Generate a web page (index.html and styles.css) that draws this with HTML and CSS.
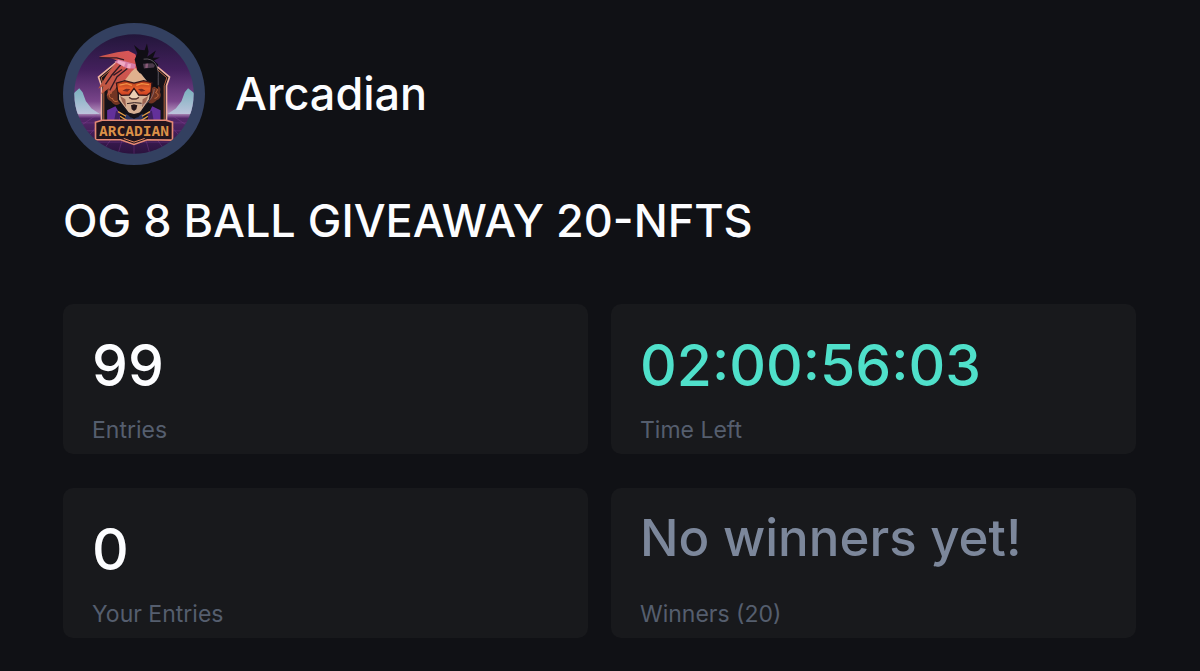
FILE: index.html
```html
<!DOCTYPE html>
<html lang="en">
<head>
<meta charset="utf-8">
<meta name="viewport" content="width=device-width, initial-scale=1">
<title>Arcadian giveaway</title>
<link rel="stylesheet" href="styles.css">
</head>
<body>
<main class="giveaway">
  <header class="host">
    <svg class="avatar" viewBox="27 27 428 428" role="img" aria-label="Arcadian logo">
      <defs>
        <clipPath id="disc"><circle cx="241" cy="241" r="180"/></clipPath>
        <linearGradient id="sky" x1="0" y1="0" x2="0" y2="1">
          <stop offset="0" stop-color="#22163a"/>
          <stop offset=".3" stop-color="#43205c"/>
          <stop offset=".56" stop-color="#79458a"/>
          <stop offset=".66" stop-color="#b795c0"/>
          <stop offset=".7" stop-color="#54286a"/>
          <stop offset="1" stop-color="#2a123e"/>
        </linearGradient>
        <linearGradient id="peak" x1="0" y1="0" x2="0" y2="1">
          <stop offset="0" stop-color="#79b0bd"/>
          <stop offset="1" stop-color="#bcc4dc"/>
        </linearGradient>
        <linearGradient id="hair" x1="1" y1="0" x2="0" y2="1">
          <stop offset="0" stop-color="#dc555c"/>
          <stop offset="1" stop-color="#b9573c"/>
        </linearGradient>
        <linearGradient id="lens" x1="0" y1="0" x2="0" y2="1">
          <stop offset="0" stop-color="#a93518"/>
          <stop offset=".55" stop-color="#ea622e"/>
          <stop offset="1" stop-color="#c83b20"/>
        </linearGradient>
      </defs>
      <circle cx="241" cy="241" r="214" fill="#334060"/>
      <g clip-path="url(#disc)">
        <path fill="url(#sky)" d="M60 60h362v362H60z"/>
        <path fill="url(#peak)" d="M58 240l18-16 10 12 10 27 17 22 25 16H58zM424 240l-20-16-10 12-10 27-17 22-25 16h82z"/>
        <path fill="none" stroke="#9146a0" stroke-width="2" opacity=".5" d="M60 310h362M60 328h362M60 352h362M60 386h362M130 303L60 350M160 303L75 400M205 380l-12 42M241 390v32M277 380l12 42M322 303l85 97M352 303l70 47M170 380l-30 42M312 380l30 42"/>
        <path fill="#161318" stroke="#efb0a0" stroke-width="5" d="M186 147l-52 43 9 26v112h196V216l9-26-45-38z"/>
        <path fill="none" stroke="#b96540" stroke-width="3" d="M182 158l-40 34 8 26v104h182V216l8-24-36-31"/>
        <path fill="#121116" d="M187 270l-27 20v42h162v-42l-30-22z"/>
        <path fill="#63309a" d="M160 290l25-12 10 17 7 37h-42zM296 278l25 12v42h-40l6-36z"/>
        <path fill="#402062" d="M187 291l13 10-8 31h-13zM281 301l14-10 7 41h-13z"/>
        <path fill="#2b345e" d="M216 300l25 16 26-16 7 33h-65z"/>
        <path fill="none" stroke="#e29b46" stroke-width="4" d="M193 294l24 14M199 308l22 14M289 294l-24 14M283 308l-22 14"/>
        <path fill="#713423" d="M174 218c-12 0-16 9-12 19-7 11 0 23 10 26 7 11 18 15 27 7l-8-44zM307 216c13 0 16 9 12 19 7 12 0 22-10 25-7 9-16 12-25 7l8-43z"/>
        <path fill="none" stroke="#c96e40" stroke-width="3" d="M177 221c-13 0-8 13-3 17-13 3-8 17 3 17 0 9 12 11 17 5M303 220c13 0 8 13 3 17 13 3 8 17-3 17"/>
        <path fill="#d6b094" stroke="#17131a" stroke-width="4" d="M192 180l89-4 15 32-8 50-23 33-14 18h-20l-14-20-23-30z"/>
        <path fill="#9c6452" d="M199 247l16 10 2 24-11-16zM284 247l-17 10-2 24 12-16z"/>
        <path fill="#ecd0b4" d="M226 250l9-26h10l11 26-9 8h-13z"/>
        <path fill="none" stroke="#52302b" stroke-width="4" d="M226 251l9 5h12l9-5"/>
        <path fill="none" stroke="#2b1a1f" stroke-width="3" d="M220 270l22-3 22 2"/>
        <path fill="#241519" d="M232 275l9-3 10 3-3 12-7 5-7-5z"/>
        <path fill="#17131a" d="M222 296l19 5 20-5-7 15h-25z"/>
        <path fill="url(#hair)" d="M135 128l55-13 34-4 21 10 8 22-4 28-16 27-29 3-22 28-23 18 7-24-24 19 7-25-16 8 25-40 20-28 14-16-20-8z"/>
        <path fill="none" stroke="#331a24" stroke-width="4" d="M137 132h52l22 6M207 146l-32 37-20 29M221 164l-31 25-22 41M205 167l-26 18"/>
        <path fill="#d77ca7" d="M182 144l12-7 52 14-2 14-26-2z"/>
        <path fill="#f0a9c4" d="M193 139l23 7-5 13-20-12zM222 149l10 2-2 13-10-1z"/>
        <path fill="#100e14" d="M249 163l-6-26 8-19-10-25 17 15 15 1 7-20 5 25-4 15 26-19-9 22 21-1-18 9 13 12-4 12 7 22-4 40-27-17-31-38z"/>
        <path fill="#4d3a4c" d="M268 150l29-2 7 6-3 7-30 3z"/>
        <path fill="#8a5a78" d="M276 150l8-1-2 14h-7z"/>
        <path fill="#e0b18e" d="M212 202l21-28 12-11 17 20 9 19z"/>
        <path fill="none" stroke="#a59ba9" stroke-width="2" opacity=".75" d="M270 136c31-5 47 20 44 54v25M302 226c-3 27-19 46-43 49"/>
        <path fill="url(#lens)" stroke="#351619" stroke-width="4" d="M188 208l25-7 28 7 29-7 25 6-3 29-12 9-25-1-14-20-14 20-24 1-11-10z"/>
        <path fill="none" stroke="#f59245" stroke-width="4" d="M197 214l22-4 16 5M248 215l16-5 23 3"/>
        <path fill="#7b2a20" d="M206 231l11-6 13 1-9 8zM276 231l-11-6-12 1 9 8z"/>
        <path fill="#22141d" stroke="#e58a75" stroke-width="5" d="M125 326l20-6h192l20 6v54l-76-1-40 14-40-14h-76z"/>
        <text class="avatar-name" x="241" y="368" text-anchor="middle">ARCADIAN</text>
        <path fill="none" stroke="#ec8c62" stroke-width="3" d="M210 375l31 11 32-11"/>
      </g>
    </svg>
    <h1 class="host-name">Arcadian</h1>
  </header>
  <h2 class="title">OG 8 BALL GIVEAWAY 20-NFTS</h2>
  <dl class="stats">
    <div class="card">
      <dt class="label">Entries</dt>
      <dd class="value">99</dd>
    </div>
    <div class="card">
      <dt class="label">Time Left</dt>
      <dd class="value value-time">02:00:56:03</dd>
    </div>
    <div class="card">
      <dt class="label">Your Entries</dt>
      <dd class="value">0</dd>
    </div>
    <div class="card">
      <dt class="label">Winners (20)</dt>
      <dd class="value value-empty">No winners yet!</dd>
    </div>
  </dl>
</main>
</body>
</html>
```
FILE: styles.css
```css
* {
  box-sizing: border-box;
}

body {
  margin: 0;
  background: #101115;
  color: #fcfdff;
  font-family: Inter, "Liberation Sans", sans-serif;
}

.giveaway {
  padding: 23px 64px 32px 63px;
}

.host {
  display: flex;
  align-items: center;
  gap: 30px;
}

.avatar {
  width: 142px;
  height: 142px;
  flex: none;
}

.avatar-name {
  fill: #dc9148;
  font: bold 44px "DejaVu Sans Mono", monospace;
}

.host-name,
.title {
  margin: 0;
  font-size: 45px;
  font-weight: 500;
  line-height: 56px;
}

.title {
  margin-top: 28px;
}

.stats {
  display: grid;
  grid-template-columns: 1fr 1fr;
  gap: 34px 23px;
  margin: 55px 0 0;
}

.card {
  display: flex;
  flex-direction: column-reverse;
  justify-content: space-between;
  min-height: 150px;
  padding: 16px 29px 10px;
  border-radius: 10px;
  background: #18191c;
}

.label {
  color: #555e6e;
  font-size: 23px;
  line-height: 28px;
}

.value {
  margin: 0;
  font-size: 57px;
  font-weight: 500;
  line-height: 92px;
}

.value-time {
  color: #4fe0ca;
}

.value-empty {
  color: #7c879b;
  font-size: 51px;
  line-height: 68px;
}
```
